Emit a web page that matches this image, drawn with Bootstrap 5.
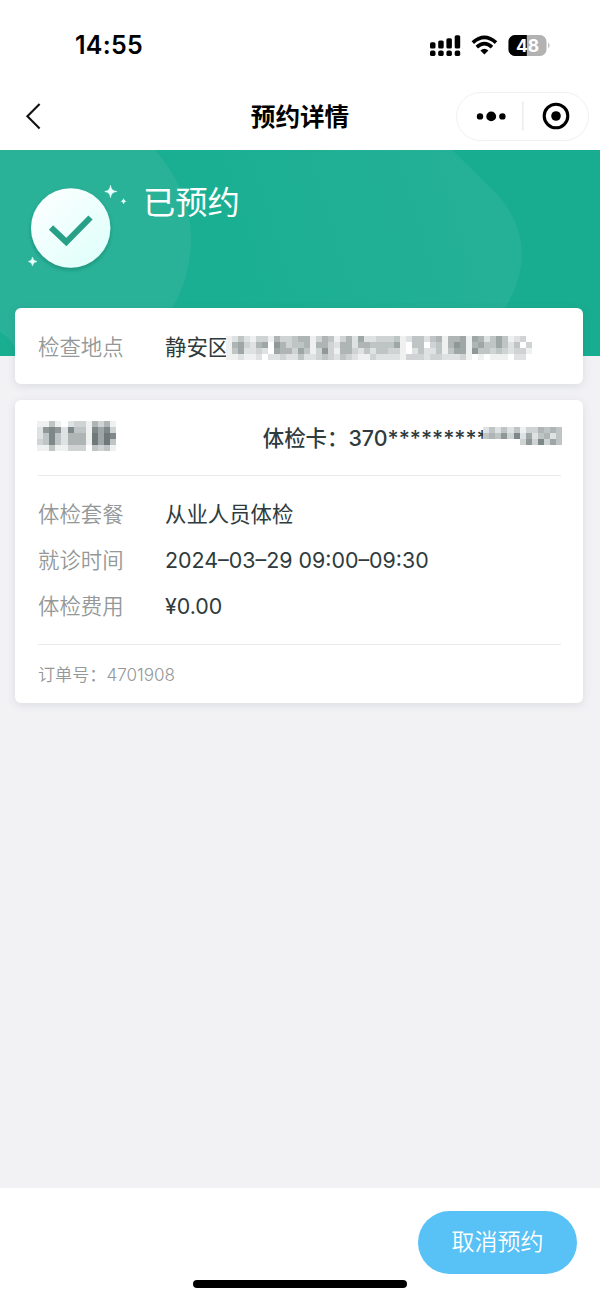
<!DOCTYPE html>
<html lang="zh-CN">
<head>
<meta charset="utf-8">
<meta name="viewport" content="width=device-width, initial-scale=1">
<title>预约详情</title>
<link rel="stylesheet" href="https://cdn.jsdelivr.net/npm/bootstrap@5.3.0/dist/css/bootstrap.min.css">
<style>
  body { background: #f2f2f5; font-family: Inter, "Noto Sans CJK SC", sans-serif; color: #2f3b3d; font-size: 21.4px; line-height: 1; }
  .screen { height: 1300px; overflow: hidden; }
  .status-bar { height: 90px; padding: 0 49px 0 75px; color: #000; }
  .clock { font-size: 25px; font-weight: 600; letter-spacing: .3px; }
  .title-bar { height: 60px; padding: 0 11px 8px 24px; color: #000; }
  .page-title { font-size: 24.6px; font-weight: 700; left: 0; right: 0; top: 15px; }
  .capsule { width: 133px; height: 49px; border: 1.5px solid #f0f0f0; border-radius: 25px; }
  .hero { height: 206px; background: #18ad90; }
  .hero-art { left: 0; top: 0; }
  .hero-title { font-size: 32.3px; color: #fff; padding: 37px 0 0 143px; }
  .cards { margin: -48px 17px 0 15px; gap: 16px; }
  .panel { background: #fff; border-radius: 6px; box-shadow: 0 2px 9px rgba(70,80,100,.13); padding: 0 22px 0 23px; }
  .place { height: 76px; padding-top: 3px; }
  .tag { width: 127px; color: #949898; font-weight: 350; flex: none; }
  .holder { height: 75px; font-weight: 500; padding-top: 2px; }
  .cardno { font-weight: 450; }
  .rows { height: 170px; border: solid #e9eaeb; border-width: 1.5px 0; padding-top: 16px; }
  .info { height: 46px; }
  .order { height: 58px; font-size: 17.1px; color: #949898; font-weight: 350; padding-top: 2px; }
  .bottom-bar { height: 112px; background: #fff; padding: 23px 23px 0 0; }
  .cancel { width: 159px; height: 63px; border-radius: 32px; background: #58c1f5; color: #fff; font-size: 23px; font-weight: 350; }
  .cancel:hover { background: #45b3ea; color: #fff; }
  .home-line { width: 214px; height: 8px; border-radius: 4px; background: #000; left: 193px; bottom: 12px; }
</style>
</head>
<body>
<div class="screen d-flex flex-column">
  <header class="bg-white">
    <div class="status-bar d-flex align-items-center justify-content-between">
      <span class="clock">14:55</span>
      <svg width="121" height="24" viewBox="0 0 121 24">
        <g>
          <rect x="0" y="9.2" width="5.5" height="6.4" rx="1.6"/><rect x="8.2" y="7.4" width="5.5" height="8.2" rx="1.6"/>
          <rect x="16.4" y="5.2" width="5.5" height="10.4" rx="1.6"/><rect x="24.7" y="2.2" width="5.5" height="13.4" rx="1.6"/>
          <rect x="0" y="17.6" width="5.5" height="5.5" rx="1.9"/><rect x="8.2" y="17.6" width="5.5" height="5.5" rx="1.9"/>
          <rect x="16.4" y="17.6" width="5.5" height="5.5" rx="1.9"/><rect x="24.7" y="17.6" width="5.5" height="5.5" rx="1.9"/>
        </g>
        <g fill="none" stroke="#000" stroke-width="3.7"><path d="M42.8 9.6Q54.4 -.8 66 9.6"/><path d="M46.8 14.1Q54.4 7.2 62 14.1"/></g>
        <path d="M50.4 17.4Q54.4 14 58.4 17.4L54.4 21.6Z"/>
        <clipPath id="bat"><rect x="78.5" y="2" width="38" height="21" rx="6.5"/></clipPath>
        <g clip-path="url(#bat)"><rect x="78" y="2" width="39" height="21" fill="#b2b2b2"/><rect x="78" y="2" width="18.8" height="21"/></g>
        <path d="M118.3 9.5q2.4 3 0 6z" fill="#aaa"/>
        <text x="97.5" y="18.7" text-anchor="middle" font-size="17.5" font-weight="700" fill="#fff">48</text>
      </svg>
    </div>
    <div class="title-bar position-relative d-flex align-items-center justify-content-between">
      <svg width="20" height="28" viewBox="0 0 20 28"><path d="M15.6 2L3.4 14.3 15.6 26.6" fill="none" stroke="#111" stroke-width="2.1"/></svg>
      <div class="page-title position-absolute text-center">预约详情</div>
      <div class="capsule position-relative">
        <svg width="130" height="46" viewBox="0 0 130 46">
          <circle cx="23" cy="23.4" r="3.2"/><circle cx="34.2" cy="23.4" r="4.9"/><circle cx="45.4" cy="23.4" r="3.2"/>
          <path d="M65.8 8.5v29" stroke="#ececec" stroke-width="1.5"/>
          <circle cx="99" cy="23" r="11.8" fill="none" stroke="#000" stroke-width="3.1"/><circle cx="99" cy="23" r="4.8"/>
        </svg>
      </div>
    </div>
  </header>

  <section class="hero position-relative">
    <svg class="hero-art position-absolute" width="600" height="206" viewBox="0 0 600 206">
      <defs>
        <linearGradient id="sheen" x1="230" y1="150" x2="500" y2="70" gradientUnits="userSpaceOnUse"><stop offset="0" stop-color="#1aaf92"/><stop offset="1" stop-color="#25b197"/></linearGradient>
        <linearGradient id="disc" x1="0" y1="0" x2="1" y2="1"><stop offset="0" stop-color="#fff"/><stop offset="1" stop-color="#dcfffa"/></linearGradient>
        <filter id="soft" x="-20%" y="-20%" width="140%" height="150%"><feDropShadow dx="0" dy="2" stdDeviation="2" flood-color="#08705c" flood-opacity=".55"/></filter>
      </defs>
      <path d="M155 0H452L497 44Q522 72 522 105Q521 135 502 162L470 206H150Z" fill="url(#sheen)"/>
      <path d="M0 0H155Q192 42 191 92Q190 130 170 162L140 206H0Z" fill="#2ab299"/>
      <path d="M0 182Q14 190 18 206H0Z" fill="#1aae91"/>
      <circle cx="70.7" cy="78" r="39.7" fill="url(#disc)" filter="url(#soft)"/>
      <path d="M51 77.5L66.3 92 90.5 67.5" fill="none" stroke="#27a087" stroke-width="6"/>
      <g fill="#e9fffa">
        <path d="M110.5 35.5Q111 41 116.8 41.5 111 42 110.5 47.5 110 42 104.8 41.5 110 41 110.5 35.5Z" stroke="#e9fffa" stroke-width=".7"/>
        <path d="M123.5 48Q124 51 127 51.2 124 51.5 123.5 54.5 123 51.5 120.2 51.2 123 51 123.5 48Z"/>
        <path d="M32.5 107Q33 111 37 111.5 33 112 32.5 116 32 112 28.3 111.5 32 111 32.5 107Z" stroke="#e9fffa" stroke-width=".5"/>
      </g>
    </svg>
    <div class="hero-title position-relative">已预约</div>
  </section>

  <main class="cards position-relative d-flex flex-column flex-grow-1">
    <div class="panel place d-flex align-items-center">
      <span class="tag">检查地点</span><span>静安区</span>
      <svg data-mosaic="place" data-cell="6" role="img" style="margin:0 0 0 -3px"></svg>
    </div>
    <div class="panel">
      <div class="holder d-flex align-items-center justify-content-between">
        <svg data-mosaic="holder" data-cell="6.1" role="img" style="margin:-5px 0 0 -1px"></svg>
        <div class="d-flex align-items-center">
          <span>体检卡：</span><span class="cardno">370*********</span>
          <svg data-mosaic="number" data-cell="6.1" role="img" style="margin:-4px -1px 0 -5px"></svg>
        </div>
      </div>
      <div class="rows">
        <div class="info d-flex align-items-center"><span class="tag">体检套餐</span><span>从业人员体检</span></div>
        <div class="info d-flex align-items-center"><span class="tag">就诊时间</span><span>2024–03–29 09:00–09:30</span></div>
        <div class="info d-flex align-items-center"><span class="tag">体检费用</span><span>¥0.00</span></div>
      </div>
      <div class="order d-flex align-items-center">订单号：<span>4701908</span></div>
    </div>
  </main>

  <footer class="bottom-bar position-relative d-flex justify-content-end align-items-start">
    <button class="btn cancel border-0 p-0">取消预约</button>
    <div class="home-line position-absolute"></div>
  </footer>
</div>
<script src="https://cdn.jsdelivr.net/npm/bootstrap@5.3.0/dist/js/bootstrap.bundle.min.js"></script>
<script>
  // Privacy mosaics: each group is a column, each digit the darkness of one cell.
  const mosaics = {
    place: '1111 2541 4662 2321 1221 3532 3620 1002 5762 3553 3352 4432 5464 5542 1112 3533 5574 4333 1212 3554 5553 2232 6521 2541 2423 3442 3442 3432 4632 1111 2003 4423 4443 2022 4323 5443 1112 5542 5762 6663 1111 6570 5641 2440 4431 6641 4431 1220 2432 3032 0310',
    holder: '12231 17441 48884 17441 02221 28553 34553 34553 11110 58994 36663 58994 13841',
    number: '240 450 240 470 230 480 123 367 323 548 453 526 444'
  };
  document.querySelectorAll('[data-mosaic]').forEach(svg => {
    const cell = +svg.dataset.cell;
    const cols = mosaics[svg.dataset.mosaic].split(' ');
    svg.setAttribute('width', cols.length * cell);
    svg.setAttribute('height', cols[0].length * cell);
    svg.setAttribute('shape-rendering', 'crispEdges');
    svg.innerHTML = cols.map((col, x) => [...col].map((n, y) => {
      const v = 255 - n * 15;
      return `<rect x="${x * cell}" y="${y * cell}" width="${cell}" height="${cell}" fill="rgb(${v - n},${v + 1},${v + 1})"/>`;
    }).join('')).join('');
  });
</script>
</body>
</html>
